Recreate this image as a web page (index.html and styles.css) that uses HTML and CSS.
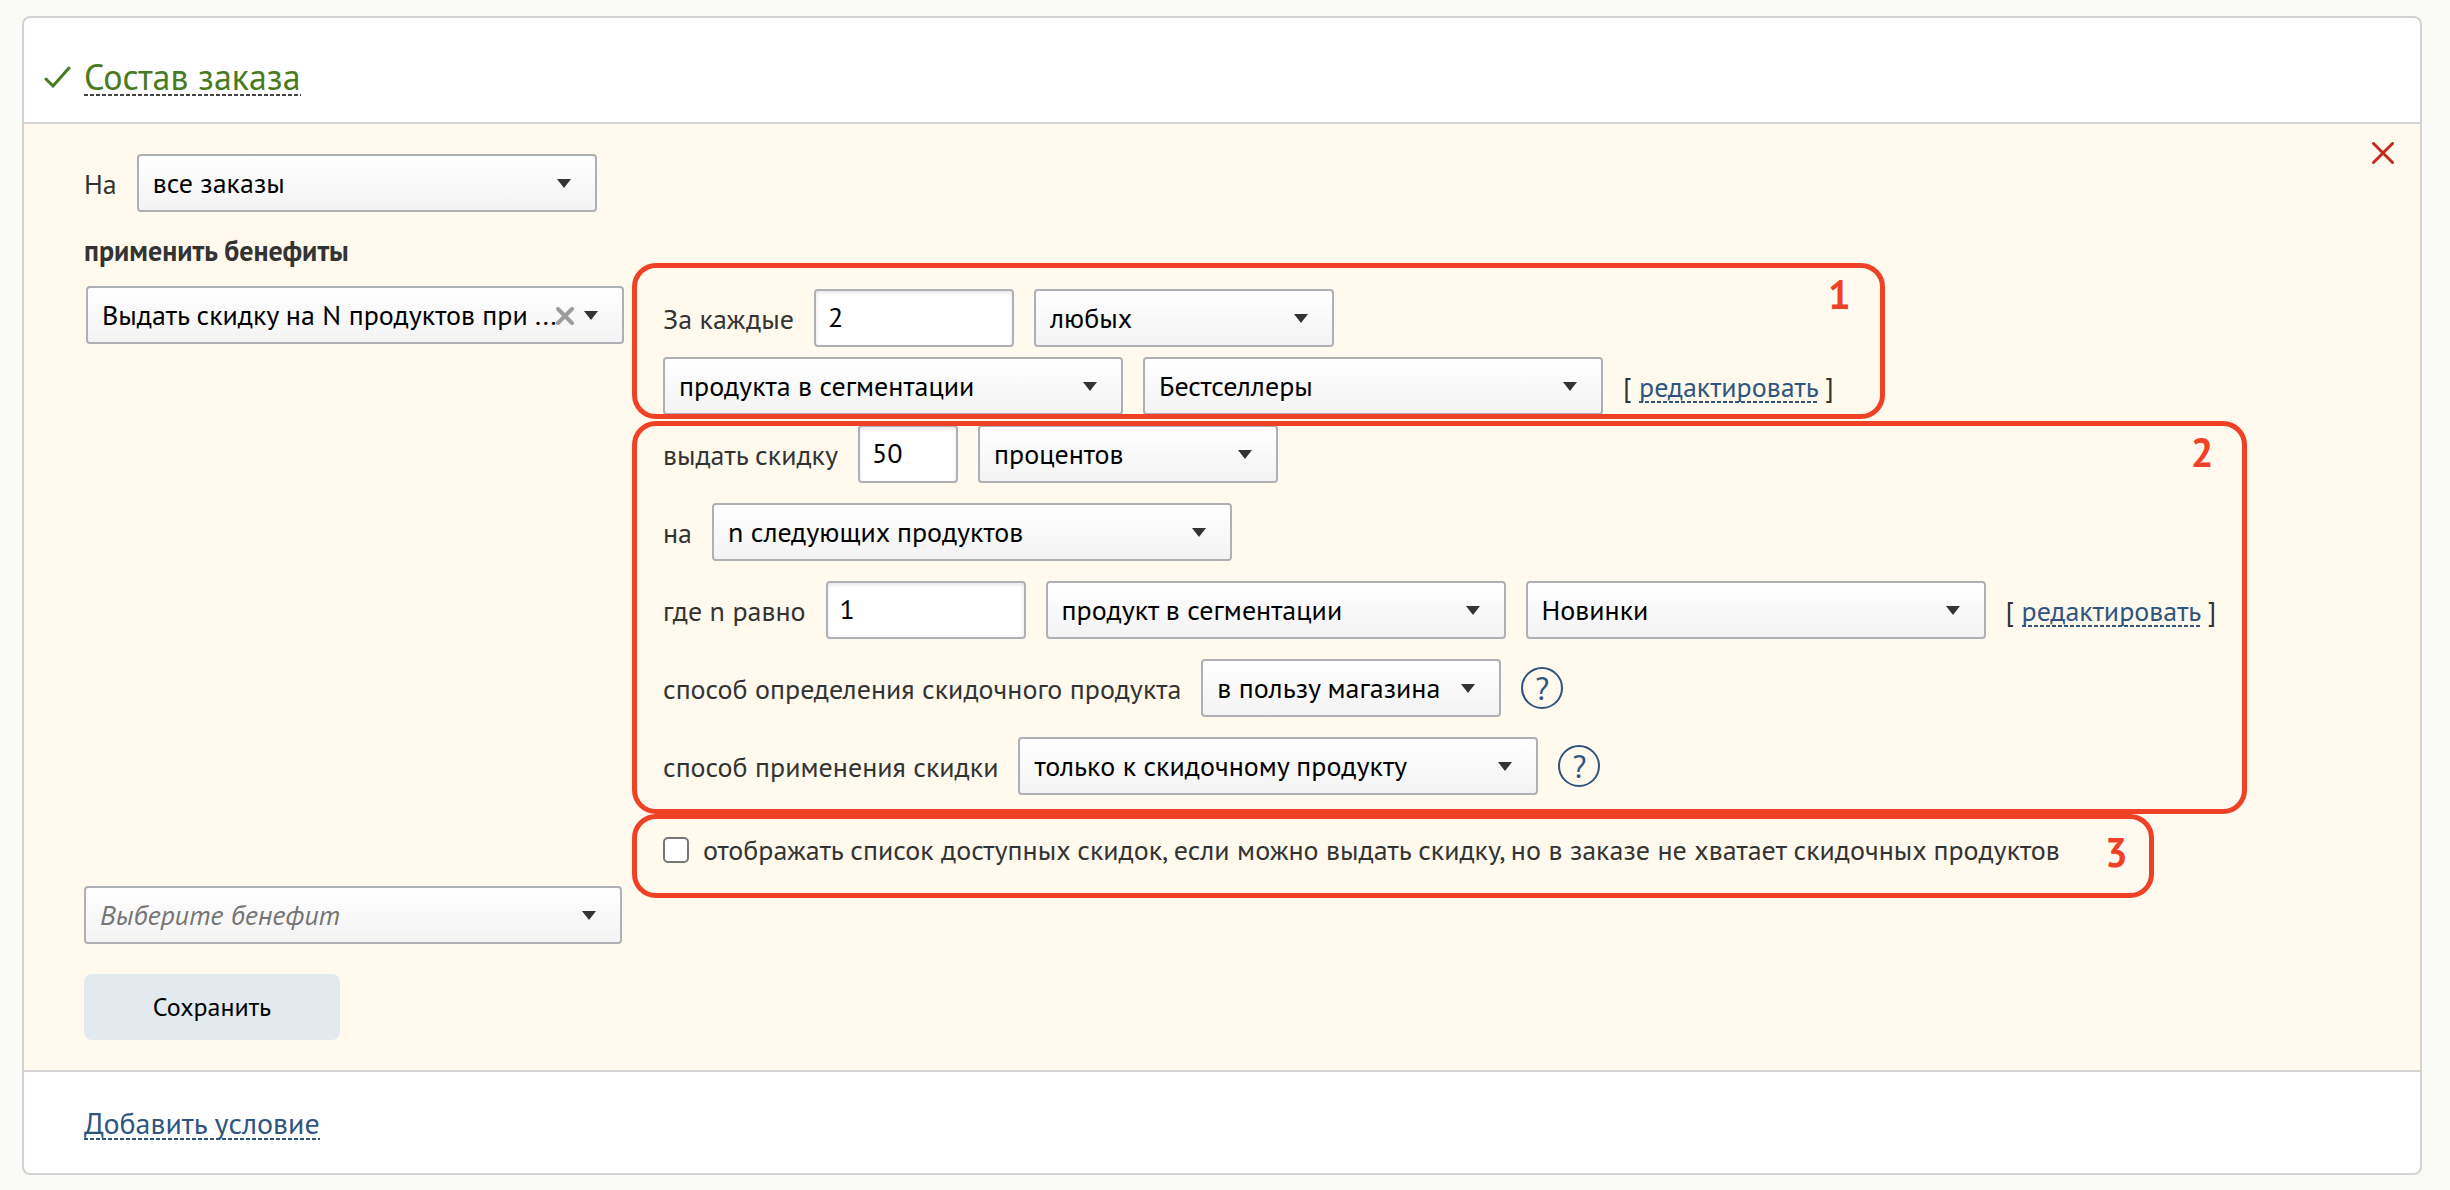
FILE: index.html
```
<!DOCTYPE html>
<html lang="ru">
<head>
<meta charset="utf-8">
<meta name="viewport" content="width=device-width, initial-scale=1">
<title>Состав заказа</title>
<link rel="stylesheet" href="styles.css">
</head>
<body>
<main class="card">
  <header class="card-head">
    <svg class="check" viewBox="0 0 27 22" aria-hidden="true"><path d="M2 13 9 20 25 2"/></svg>
    <h1 class="title"><a class="link link-title" href="#order">Состав заказа</a></h1>
  </header>

  <form class="rule" id="order">
    <button class="close" type="button" aria-label="Удалить условие">
      <svg viewBox="0 0 22 22" aria-hidden="true"><path d="M1.500 1.500 20.500 20.500M20.500 1.500 1.500 20.500"/></svg>
    </button>

    <div class="row">
      <label class="label" for="scope">На</label>
      <select class="control select w-l" id="scope"><option>все заказы</option></select>
    </div>

    <h2 class="subtitle">применить бенефиты</h2>

    <div class="benefit">
      <div class="picker">
        <select class="control select" aria-label="Бенефит"><option>Выдать скидку на N продуктов при ...</option></select>
        <button class="clear" type="button" aria-label="Очистить">
          <svg viewBox="0 0 18 18" aria-hidden="true"><path d="M2 2 16 16M16 2 2 16"/></svg>
        </button>
      </div>

      <div class="groups">
        <section class="group group-each">
          <div class="row">
            <label class="label" for="each">За каждые</label>
            <input class="control input w-s" id="each" type="text" value="2">
            <select class="control select w-m" aria-label="Каких"><option>любых</option></select>
          </div>
          <div class="row">
            <select class="control select w-l" aria-label="Условие отбора"><option>продукта в сегментации</option></select>
            <select class="control select w-l" aria-label="Сегмент"><option>Бестселлеры</option></select>
            <span class="edit">[ <a class="link" href="#edit-1">редактировать</a> ]</span>
          </div>
          <span class="number">1</span>
        </section>

        <section class="group group-discount">
          <div class="row">
            <label class="label" for="discount">выдать скидку</label>
            <input class="control input w-xs" id="discount" type="text" value="50">
            <select class="control select w-m" aria-label="Единица скидки"><option>процентов</option></select>
          </div>
          <div class="row">
            <label class="label" for="target">на</label>
            <select class="control select w-xl" id="target"><option>n следующих продуктов</option></select>
          </div>
          <div class="row">
            <label class="label" for="count">где n равно</label>
            <input class="control input w-s" id="count" type="text" value="1">
            <select class="control select w-l" aria-label="Условие отбора"><option>продукт в сегментации</option></select>
            <select class="control select w-l" aria-label="Сегмент"><option>Новинки</option></select>
            <span class="edit">[ <a class="link" href="#edit-2">редактировать</a> ]</span>
          </div>
          <div class="row">
            <label class="label" for="pick">способ определения скидочного продукта</label>
            <select class="control select w-m" id="pick"><option>в пользу магазина</option></select>
            <button class="help" type="button">?</button>
          </div>
          <div class="row">
            <label class="label" for="apply">способ применения скидки</label>
            <select class="control select w-xl" id="apply"><option>только к скидочному продукту</option></select>
            <button class="help" type="button">?</button>
          </div>
          <span class="number">2</span>
        </section>

        <section class="group group-list">
          <label class="tick">
            <input class="box" type="checkbox">
            отображать список доступных скидок, если можно выдать скидку, но в заказе не хватает скидочных продуктов
          </label>
          <span class="number">3</span>
        </section>
      </div>
    </div>

    <select class="control select select-empty" aria-label="Новый бенефит"><option>Выберите бенефит</option></select>
    <button class="save" type="submit">Сохранить</button>
  </form>

  <footer class="card-foot">
    <a class="link link-add" href="#add">Добавить условие</a>
  </footer>
</main>
</body>
</html>
```
FILE: styles.css
```
:root {
  --ink: #333;
  --blue: #2f557f;
  --green: #4a7a1e;
  --red: #ef4125;
  --line: #d3d3d3;
  --control-line: #aeb0b5;
  --cream: #fffaed;
}

* { box-sizing: border-box; }

body {
  margin: 0;
  padding: 16px 28px 16px 22px;
  background: #fafbf7;
  color: var(--ink);
  font: 28px/36px "PT Sans", "Noto Sans", sans-serif;
}

.card {
  border: 2px solid var(--line);
  border-radius: 8px;
  background: #fff;
}

.card-head {
  display: flex;
  align-items: center;
  gap: 13px;
  padding: 36px 20px 22px;
}

.check {
  width: 27px;
  height: 22px;
  fill: none;
  stroke: var(--green);
  stroke-width: 3;
  stroke-linecap: round;
}

.title {
  margin: 0;
  font-size: 36px;
  font-weight: 400;
  line-height: 46px;
}

/* Dashed underline, drawn as a repeating gradient so the dash length is fixed */
.link {
  background: repeating-linear-gradient(90deg, currentColor 0 4px, transparent 4px 6px) left bottom 2px / 100% 2px no-repeat;
  color: var(--blue);
  text-decoration: none;
}

.link-title {
  background-image: repeating-linear-gradient(90deg, #444 0 4px, transparent 4px 6px);
  background-position: left bottom 4px;
  color: var(--green);
}

.link-add { font-size: 30px; }

.rule {
  position: relative;
  display: flex;
  flex-direction: column;
  align-items: flex-start;
  padding: 30px 60px;
  border: solid var(--line);
  border-width: 2px 0;
  background: var(--cream);
}

.row {
  display: flex;
  align-items: center;
  gap: 20px;
}

.label,
.edit { padding-top: 2px; white-space: nowrap; }

.control {
  height: 58px;
  border: 2px solid var(--control-line);
  border-radius: 4px;
  color: #000;
  font: inherit;
}

.input {
  padding: 0 12px 4px;
  background: #fff;
  box-shadow: inset 0 2px 4px rgba(0, 0, 0, .1);
}

.select {
  appearance: none;
  padding: 0 48px 0 14px;
  background:
    url("data:image/svg+xml,%3Csvg xmlns='http://www.w3.org/2000/svg' width='14' height='10'%3E%3Cpath d='M0 1h14L7 10z' fill='%23333'/%3E%3C/svg%3E") right 24px center no-repeat,
    linear-gradient(#fff, #f3f3f3);
}

.w-xs { width: 100px; }
.w-s { width: 200px; }
.w-m { width: 300px; }
.w-l { width: 460px; }
.w-xl { width: 520px; }

.subtitle {
  margin: 27px 0 0;
  font-size: 28px;
  line-height: 24px;
}

.close {
  position: absolute;
  top: 18px;
  right: 26px;
  width: 22px;
  height: 22px;
  padding: 0;
  border: 0;
  background: none;
}

.close svg,
.clear svg {
  display: block;
  width: 100%;
  fill: none;
}

.close svg { stroke: #c5281c; stroke-width: 3; stroke-linecap: round; }
.clear svg { stroke: #9c9c9c; stroke-width: 4; stroke-linecap: round; }

/* The next picker tucks up beside the last callout */
.benefit {
  display: flex;
  align-items: flex-start;
  gap: 8px;
  margin-bottom: -12px;
}

.picker {
  position: relative;
  margin: 23px 0 0 2px;
}

.picker .select,
.select-empty { width: 538px; }

.clear {
  position: absolute;
  top: 21px;
  right: 50px;
  width: 18px;
  height: 18px;
  padding: 0;
  border: 0;
  background: none;
}

.groups {
  display: flex;
  flex-direction: column;
  align-items: flex-start;
}

.group {
  position: relative;
  display: flex;
  flex-direction: column;
}

/* The callout frame lies over the controls of its group */
.group::after {
  content: "";
  position: absolute;
  inset: 0;
  border: 5px solid var(--red);
  border-radius: 24px;
  pointer-events: none;
}

.group-each {
  gap: 10px;
  margin-bottom: 2px;
  padding: 26px 51px 4px 31px;
}

.group-discount {
  gap: 20px;
  padding: 4px 31px 19px;
}

.group-list { padding: 18px 94px 30px 31px; }

.number {
  position: absolute;
  top: 8px;
  right: 34px;
  color: var(--red);
  font-size: 40px;
  font-weight: 700;
  line-height: 46px;
}

.group-list .number {
  top: 15px;
  right: 26px;
}

.help {
  width: 42px;
  height: 42px;
  padding: 0;
  border: 2px solid var(--blue);
  border-radius: 50%;
  background: none;
  color: var(--blue);
  font: inherit;
  font-size: 32px;
  line-height: 36px;
}

.tick {
  display: flex;
  align-items: center;
  gap: 14px;
}

.box {
  appearance: none;
  width: 26px;
  height: 26px;
  margin: 0;
  border: 2px solid #767676;
  border-radius: 5px;
  background: #fff;
}

.select-empty {
  color: #757575;
  font-style: italic;
}

.save {
  width: 256px;
  height: 66px;
  margin-top: 30px;
  border: 0;
  border-radius: 8px;
  background: #e2e9ef;
  color: #000;
  font: inherit;
  font-size: 26px;
}

.card-foot { padding: 33px 60px 31px; }
```
